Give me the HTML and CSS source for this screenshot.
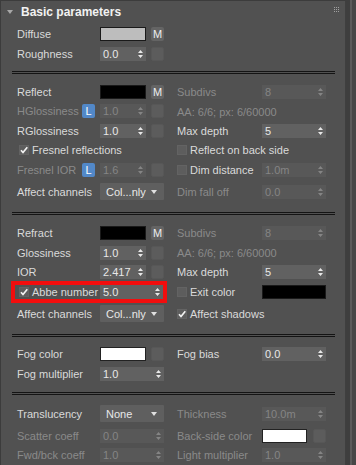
FILE: index.html
```html
<!DOCTYPE html>
<html lang="en">
<head>
    <meta charset="UTF-8">
    <meta name="viewport" content="width=device-width, initial-scale=1.0">
    <link rel="stylesheet" href="styles.css">
</head>
<body>
    <div class="window">
        <div class="rollout">
            <!-- rollout header -->
            <div class="rollout-header">
                <svg class="fold" width="6" height="4" viewBox="0 0 6 4"><path d="M0 0H6L3 4Z"/></svg>
                <span class="title">Basic parameters</span>
                <svg class="grip" width="5" height="5" viewBox="0 0 5 5"><path d="M0 0h1v1H0zM2 0h1v1H2zM4 0h1v1H4zM0 2h1v1H0zM2 2h1v1H2zM4 2h1v1H4zM0 4h1v1H0zM2 4h1v1H2zM4 4h1v1H4z"/></svg>
            </div>

            <!-- diffuse -->
            <div class="group first">
                <div class="row">
                    <div class="cell">
                        <span class="label">Diffuse</span>
                        <span class="swatch grey"></span>
                        <span class="btn-m">M</span>
                    </div>
                    <div class="cell"></div>
                </div>
                <div class="row">
                    <div class="cell">
                        <span class="label">Roughness</span>
                        <span class="spin"><span>0.0</span><svg class="updown" width="5" height="8" viewBox="0 0 5 8"><path d="M0 3L2.5 0L5 3ZM0 5H5L2.5 8Z"/></svg></span>
                        <span class="sq"></span>
                    </div>
                    <div class="cell"></div>
                </div>
            </div>

            <div class="divider"></div>

            <!-- reflection -->
            <div class="group">
                <div class="row">
                    <div class="cell">
                        <span class="label">Reflect</span>
                        <span class="swatch black"></span>
                        <span class="btn-m">M</span>
                    </div>
                    <div class="cell right">
                        <span class="label dis">Subdivs</span>
                        <span class="spin full dis"><span>8</span><svg class="updown" width="5" height="8" viewBox="0 0 5 8"><path d="M0 3L2.5 0L5 3ZM0 5H5L2.5 8Z"/></svg></span>
                    </div>
                </div>
                <div class="row">
                    <div class="cell">
                        <span class="label dis">HGlossiness<span class="btn-l">L</span></span>
                        <span class="spin dis"><span>1.0</span><svg class="updown" width="5" height="8" viewBox="0 0 5 8"><path d="M0 3L2.5 0L5 3ZM0 5H5L2.5 8Z"/></svg></span>
                        <span class="sq"></span>
                    </div>
                    <div class="cell right">
                        <span class="note dis">AA: 6/6; px: 6/60000</span>
                    </div>
                </div>
                <div class="row">
                    <div class="cell">
                        <span class="label">RGlossiness</span>
                        <span class="spin"><span>1.0</span><svg class="updown" width="5" height="8" viewBox="0 0 5 8"><path d="M0 3L2.5 0L5 3ZM0 5H5L2.5 8Z"/></svg></span>
                        <span class="sq"></span>
                    </div>
                    <div class="cell right">
                        <span class="label">Max depth</span>
                        <span class="spin full"><span>5</span><svg class="updown" width="5" height="8" viewBox="0 0 5 8"><path d="M0 3L2.5 0L5 3ZM0 5H5L2.5 8Z"/></svg></span>
                    </div>
                </div>
                <div class="row">
                    <div class="cell">
                        <span class="check on"><svg width="10" height="10" viewBox="0 0 10 10"><path d="M2 5.2L4 7.5L8.3 2.3"/></svg></span>
                        <span>Fresnel reflections</span>
                    </div>
                    <div class="cell right">
                        <span class="check"></span>
                        <span>Reflect on back side</span>
                    </div>
                </div>
                <div class="row">
                    <div class="cell">
                        <span class="label dis">Fresnel IOR<span class="btn-l">L</span></span>
                        <span class="spin dis"><span>1.6</span><svg class="updown" width="5" height="8" viewBox="0 0 5 8"><path d="M0 3L2.5 0L5 3ZM0 5H5L2.5 8Z"/></svg></span>
                        <span class="sq"></span>
                    </div>
                    <div class="cell right">
                        <span class="label"><span class="check"></span>Dim distance</span>
                        <span class="spin full dis"><span>1.0m</span><svg class="updown" width="5" height="8" viewBox="0 0 5 8"><path d="M0 3L2.5 0L5 3ZM0 5H5L2.5 8Z"/></svg></span>
                    </div>
                </div>
                <div class="row tall">
                    <div class="cell">
                        <span class="label">Affect channels</span>
                        <span class="combo"><span>Col...nly</span><svg width="6" height="4" viewBox="0 0 6 4"><path d="M0 0H6L3 4Z"/></svg></span>
                    </div>
                    <div class="cell right">
                        <span class="label dis">Dim fall off</span>
                        <span class="spin full dis"><span>0.0</span><svg class="updown" width="5" height="8" viewBox="0 0 5 8"><path d="M0 3L2.5 0L5 3ZM0 5H5L2.5 8Z"/></svg></span>
                    </div>
                </div>
            </div>

            <div class="divider"></div>

            <!-- refraction -->
            <div class="group">
                <div class="row">
                    <div class="cell">
                        <span class="label">Refract</span>
                        <span class="swatch black"></span>
                        <span class="btn-m">M</span>
                    </div>
                    <div class="cell right">
                        <span class="label dis">Subdivs</span>
                        <span class="spin full dis"><span>8</span><svg class="updown" width="5" height="8" viewBox="0 0 5 8"><path d="M0 3L2.5 0L5 3ZM0 5H5L2.5 8Z"/></svg></span>
                    </div>
                </div>
                <div class="row">
                    <div class="cell">
                        <span class="label">Glossiness</span>
                        <span class="spin"><span>1.0</span><svg class="updown" width="5" height="8" viewBox="0 0 5 8"><path d="M0 3L2.5 0L5 3ZM0 5H5L2.5 8Z"/></svg></span>
                        <span class="sq"></span>
                    </div>
                    <div class="cell right">
                        <span class="note dis">AA: 6/6; px: 6/60000</span>
                    </div>
                </div>
                <div class="row">
                    <div class="cell">
                        <span class="label">IOR</span>
                        <span class="spin"><span>2.417</span><svg class="updown" width="5" height="8" viewBox="0 0 5 8"><path d="M0 3L2.5 0L5 3ZM0 5H5L2.5 8Z"/></svg></span>
                        <span class="sq"></span>
                    </div>
                    <div class="cell right">
                        <span class="label">Max depth</span>
                        <span class="spin full"><span>5</span><svg class="updown" width="5" height="8" viewBox="0 0 5 8"><path d="M0 3L2.5 0L5 3ZM0 5H5L2.5 8Z"/></svg></span>
                    </div>
                </div>
                <div class="row">
                    <div class="cell marked">
                        <span class="label"><span class="check on"><svg width="10" height="10" viewBox="0 0 10 10"><path d="M2 5.2L4 7.5L8.3 2.3"/></svg></span>Abbe number</span>
                        <span class="spin abbe"><span>5.0</span><svg class="updown" width="5" height="8" viewBox="0 0 5 8"><path d="M0 3L2.5 0L5 3ZM0 5H5L2.5 8Z"/></svg></span>
                    </div>
                    <div class="cell right">
                        <span class="label"><span class="check"></span>Exit color</span>
                        <span class="swatch black full"></span>
                    </div>
                </div>
                <div class="row tall">
                    <div class="cell">
                        <span class="label">Affect channels</span>
                        <span class="combo"><span>Col...nly</span><svg width="6" height="4" viewBox="0 0 6 4"><path d="M0 0H6L3 4Z"/></svg></span>
                    </div>
                    <div class="cell right">
                        <span class="check on"><svg width="10" height="10" viewBox="0 0 10 10"><path d="M2 5.2L4 7.5L8.3 2.3"/></svg></span>
                        <span>Affect shadows</span>
                    </div>
                </div>
            </div>

            <div class="divider"></div>

            <!-- fog -->
            <div class="group fog">
                <div class="row">
                    <div class="cell">
                        <span class="label">Fog color</span>
                        <span class="swatch white"></span>
                        <span class="sq"></span>
                    </div>
                    <div class="cell right">
                        <span class="label">Fog bias</span>
                        <span class="spin full"><span>0.0</span><svg class="updown" width="5" height="8" viewBox="0 0 5 8"><path d="M0 3L2.5 0L5 3ZM0 5H5L2.5 8Z"/></svg></span>
                    </div>
                </div>
                <div class="row">
                    <div class="cell">
                        <span class="label">Fog multiplier</span>
                        <span class="spin full"><span>1.0</span><svg class="updown" width="5" height="8" viewBox="0 0 5 8"><path d="M0 3L2.5 0L5 3ZM0 5H5L2.5 8Z"/></svg></span>
                    </div>
                    <div class="cell"></div>
                </div>
            </div>

            <div class="divider"></div>

            <!-- translucency -->
            <div class="group last">
                <div class="row tall">
                    <div class="cell">
                        <span class="label">Translucency</span>
                        <span class="combo"><span>None</span><svg width="6" height="4" viewBox="0 0 6 4"><path d="M0 0H6L3 4Z"/></svg></span>
                    </div>
                    <div class="cell right">
                        <span class="label dis">Thickness</span>
                        <span class="spin full dis"><span>10.0m</span><svg class="updown" width="5" height="8" viewBox="0 0 5 8"><path d="M0 3L2.5 0L5 3ZM0 5H5L2.5 8Z"/></svg></span>
                    </div>
                </div>
                <div class="row">
                    <div class="cell">
                        <span class="label dis">Scatter coeff</span>
                        <span class="spin full dis"><span>0.0</span><svg class="updown" width="5" height="8" viewBox="0 0 5 8"><path d="M0 3L2.5 0L5 3ZM0 5H5L2.5 8Z"/></svg></span>
                    </div>
                    <div class="cell right">
                        <span class="label dis">Back-side color</span>
                        <span class="swatch white short"></span>
                        <span class="sq wide-gap"></span>
                    </div>
                </div>
                <div class="row">
                    <div class="cell">
                        <span class="label dis">Fwd/bck coeff</span>
                        <span class="spin full dis"><span>1.0</span><svg class="updown" width="5" height="8" viewBox="0 0 5 8"><path d="M0 3L2.5 0L5 3ZM0 5H5L2.5 8Z"/></svg></span>
                    </div>
                    <div class="cell right">
                        <span class="label dis">Light multiplier</span>
                        <span class="spin full dis"><span>1.0</span><svg class="updown" width="5" height="8" viewBox="0 0 5 8"><path d="M0 3L2.5 0L5 3ZM0 5H5L2.5 8Z"/></svg></span>
                    </div>
                </div>
            </div>
        </div>

        <!-- scrollbar strip -->
        <div class="scrollbar"></div>
    </div>
</body>
</html>
```

FILE: styles.css
```css
/* base */
body {
    margin: 0;
    background-color: #444;
    font-family: "Liberation Sans", Arial, sans-serif;
    font-size: 11px;
    color: #dadada;
}

.window {
    display: flex;
    width: 356px;
    height: 465px;
    overflow: hidden;
}

.rollout {
    width: 346px;
    flex-shrink: 0;
    box-sizing: border-box;
    background-color: #515151;
    border-top: 1px solid #3c3c3c;
    border-left: 1px solid #3c3c3c;
    border-right: 1px solid #3f3f3f;
}

.scrollbar {
    flex: 1;
    background: linear-gradient(to right, #3e3e3e 0 4px, #5b5b5b 4px 6px, #474747 6px);
}

/* header */
.rollout-header {
    height: 21px;
    display: flex;
    align-items: center;
    padding-left: 6px;
}

.fold {
    fill: #a8a8a8;
}

.title {
    margin-left: 8px;
    font-size: 12px;
    font-weight: bold;
    color: #f2f2f2;
}

.grip {
    fill: #a0a0a0;
    margin-left: auto;
    margin-right: 6px;
    align-self: flex-start;
    margin-top: 6px;
}

/* groups and rows */
.group {
    display: flex;
    flex-direction: column;
    gap: 5.5px;
    padding: 11px 0 11px 16px;
}

.group.first {
    padding-top: 5px;
    padding-bottom: 10px;
}

.group.fog {
    padding-top: 10px;
    padding-bottom: 11.5px;
}

.group.last {
    padding-top: 9px;
}

.divider {
    height: 1px;
    margin: 0 10px 0 11px;
    border-top: 1px solid #141414;
    border-bottom: 1px solid #141414;
}

.row {
    display: grid;
    grid-template-columns: 147px 150px;
    column-gap: 13px;
    height: 14px;
}

.row.tall {
    height: 17px;
    margin: 1px 0;
}

.cell {
    display: flex;
    align-items: center;
    white-space: nowrap;
}

.label {
    width: 83px;
    flex-shrink: 0;
    display: flex;
    align-items: center;
}

.right .label {
    width: 85px;
}

.dis {
    color: #8a8a8a;
}

.note {
    padding-top: 1px;
}

/* controls */
.swatch {
    width: 46px;
    height: 14px;
    box-sizing: border-box;
    border: 1px solid #1a1a1a;
}

.swatch.grey { background-color: #bdbdbd; }
.swatch.black { background-color: #000; }
.swatch.white { background-color: #fff; border-color: #222; }
.swatch.full { width: 64px; }
.swatch.short { width: 45px; }

.btn-m {
    width: 13px;
    height: 14px;
    margin-left: 5px;
    background-color: #646464;
    border-radius: 2px;
    color: #eee;
    font-size: 11px;
    line-height: 14px;
    text-align: center;
}

.sq {
    width: 13px;
    height: 14px;
    margin-left: 5px;
    box-sizing: border-box;
    background-color: #5c5c5c;
    border: 1px solid #575757;
    border-radius: 2px;
}

.sq.wide-gap {
    margin-left: 6px;
}

.btn-l {
    width: 13px;
    height: 14px;
    margin-left: auto;
    margin-right: 5px;
    background-color: #5288c8;
    border-radius: 2px;
    color: #fff;
    line-height: 14px;
    text-align: center;
}

.spin {
    width: 46px;
    height: 14px;
    box-sizing: border-box;
    padding: 0 3px;
    display: flex;
    align-items: center;
    justify-content: space-between;
    background-color: #616161;
    color: #e8e8e8;
}

.spin.full { width: 64px; }
.spin.abbe { width: 63px; }

.spin.dis {
    background-color: #585858;
    color: #858585;
}

.updown {
    fill: currentColor;
}

.combo {
    width: 70px;
    height: 17px;
    box-sizing: border-box;
    padding: 0 7px 0 6px;
    display: flex;
    align-items: center;
    justify-content: space-between;
    background-color: #5f5f5f;
    border-radius: 1px;
    color: #e8e8e8;
    font-size: 11px;
}

.combo svg {
    fill: #e0e0e0;
}

.check {
    width: 10px;
    height: 10px;
    flex-shrink: 0;
    box-sizing: border-box;
    margin-right: 3px;
    background-color: #5d5d5d;
    border: 1px solid #636363;
}

.cell > .check:first-child,
.cell > .label > .check:first-child {
    margin-left: 2px;
}

.right > .check:first-child,
.right > .label > .check:first-child {
    margin-left: 0;
}

.check svg {
    display: block;
    margin: -1px;
    fill: none;
    stroke: #f2f2f2;
    stroke-width: 1.7;
}

/* red annotation box */
.marked {
    margin: 0 1px 0 -2px;
    padding-left: 2px;
    outline: 4px solid #f20d0d;
}
```
